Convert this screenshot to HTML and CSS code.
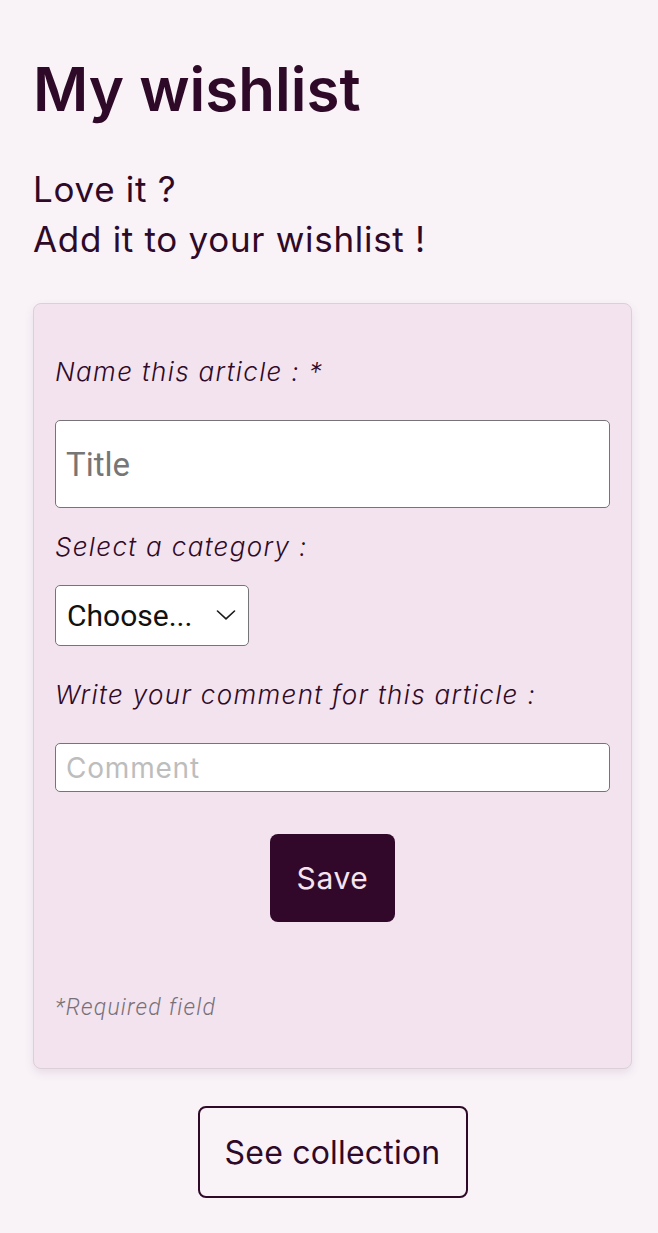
FILE: index.html
```html
<!DOCTYPE html>
<html lang="en">
<head>
<meta charset="utf-8">
<title>My wishlist</title>
<link rel="stylesheet" href="styles.css">
</head>
<body>
<main class="page">
  <h1 class="title">My wishlist</h1>
  <p class="intro">Love it ?<br>Add it to your wishlist !</p>
  <form class="card">
    <label class="label label-name" for="title">Name this article : *</label>
    <input class="field field-title" id="title" type="text" placeholder="Title">
    <label class="label label-cat" for="cat">Select a category :</label>
    <div class="select-wrap">
      <select class="select" id="cat">
        <option>Choose...</option>
      </select>
      <svg class="chevron" width="20" height="10" viewBox="0 0 20 10" aria-hidden="true"><path d="M1.5 1 L10 8.8 L18.5 1" fill="none" stroke="#1a1a1a" stroke-width="1.6" stroke-linecap="round" stroke-linejoin="round"/></svg>
    </div>
    <label class="label label-comment" for="comment">Write your comment for this article :</label>
    <input class="field field-comment" id="comment" type="text" placeholder="Comment">
    <div class="actions"><button class="save" type="button">Save</button></div>
    <p class="required">*Required field</p>
  </form>
  <div class="more"><button class="collection" type="button">See collection</button></div>
</main>
</body>
</html>
```
FILE: styles.css
```css
html, body {
  margin: 0;
  padding: 0;
  background: #f9f3f8;
}
body {
  font-family: Inter, "Open Sans", sans-serif;
  color: #2f0a28;
}
.page {
  padding: 49px 26px 0 33px;
  display: flex;
  flex-direction: column;
}
.title {
  margin: 0;
  font-size: 60px;
  font-weight: 600;
  line-height: 80px;
}
.intro {
  margin: 35px 0 0;
  font-size: 35px;
  line-height: 50px;
  font-weight: 400;
  letter-spacing: 0.7px;
}
.card {
  margin-top: 39px;
  background: #f3e3ee;
  border: 1.5px solid #dccfd8;
  border-radius: 8px;
  box-shadow: 0 4px 10px rgba(80, 40, 70, 0.10);
  padding: 52px 21px 45px 21px;
  display: flex;
  flex-direction: column;
  align-items: flex-start;
}
.label {
  font-size: 26px;
  font-style: italic;
  font-weight: 300;
  line-height: 32px;
  letter-spacing: 1.35px;
}
.field {
  box-sizing: border-box;
  width: 100%;
  background: #fff;
  border: 1.5px solid #777477;
  border-radius: 5px;
  color: #222;
}
.field-title {
  margin: 32px 0 23px;
  height: 88px;
  padding: 0 10px;
  font-family: Roboto, sans-serif;
  font-size: 33px;
}
.field-title::placeholder {
  color: #767676;
}
.select-wrap {
  position: relative;
  margin: 22px 0 33px;
}
.select {
  appearance: none;
  -webkit-appearance: none;
  box-sizing: border-box;
  width: 194px;
  height: 61px;
  background: #fff;
  border: 1.5px solid #777477;
  border-radius: 5px;
  padding: 0 0 0 11px;
  font-family: Roboto, sans-serif;
  font-size: 30px;
  color: #111;
}
.chevron {
  position: absolute;
  right: 13px;
  top: 25px;
  pointer-events: none;
}
.field-comment {
  margin: 32px 0 42px;
  height: 49px;
  padding: 0 10px;
  font-family: Inter, sans-serif;
  font-size: 28px;
  font-weight: 400;
  letter-spacing: 0.8px;
}
.field-comment::placeholder {
  color: #bdbdbd;
}
.actions {
  align-self: stretch;
  display: flex;
  justify-content: center;
}
.save {
  width: 125px;
  height: 88px;
  border: none;
  border-radius: 8px;
  background: #31082a;
  color: #f6e4f0;
  font-family: Inter, sans-serif;
  font-size: 30px;
  letter-spacing: 0.6px;
  cursor: pointer;
}
.required {
  margin: 71px 0 0;
  font-family: Roboto, sans-serif;
  font-size: 23px;
  font-style: italic;
  font-weight: 300;
  color: #77707a;
  line-height: 30px;
  letter-spacing: 1.2px;
}
.more {
  display: flex;
  justify-content: center;
  padding: 37px 0 30px;
}
.collection {
  box-sizing: border-box;
  width: 270px;
  height: 92px;
  border: 2px solid #2f0a28;
  border-radius: 8px;
  background: transparent;
  color: #2f0a28;
  font-family: Inter, sans-serif;
  font-size: 32px;
  letter-spacing: 0.2px;
  cursor: pointer;
}
```
